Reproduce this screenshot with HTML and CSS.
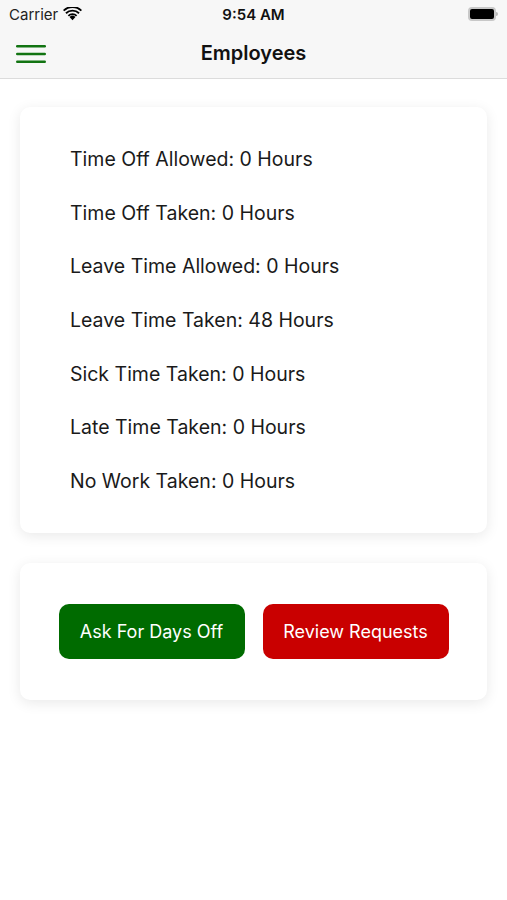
FILE: index.html
```html
<!DOCTYPE html>
<html>
<head>
  <meta charset="utf-8">
  <title>Employees</title>
  <link rel="stylesheet" href="styles.css">
</head>
<body>
  <header class="topbar">
    <div class="status">
      <span class="carrier">Carrier
        <svg class="wifi" width="19" height="14" viewBox="0 0 18 13">
          <path d="M9 12.5 L6.2 9.4 A4 4 0 0 1 11.8 9.4 Z" fill="#000"/>
          <path d="M4.5 7.6 A6.5 6.5 0 0 1 13.5 7.6 L12.3 8.9 A4.7 4.7 0 0 0 5.7 8.9 Z" fill="#000"/>
          <path d="M2.2 5.1 A9.8 9.8 0 0 1 15.8 5.1 L14.6 6.4 A8 8 0 0 0 3.4 6.4 Z" fill="#000"/>
          <path d="M0 2.6 A13 13 0 0 1 18 2.6 L16.8 3.9 A11.2 11.2 0 0 0 1.2 3.9 Z" fill="#000"/>
        </svg>
      </span>
      <span class="clock">9:54 AM</span>
      <span class="battery"><span class="battery-level"></span></span>
    </div>
    <nav class="navbar">
      <button class="menu" aria-label="Menu">
        <svg width="30" height="20" viewBox="0 0 30 20">
          <rect x="0" y="1" width="30" height="2.4" rx="1.2" fill="#127412"/>
          <rect x="0" y="8.8" width="30" height="2.4" rx="1.2" fill="#127412"/>
          <rect x="0" y="16.6" width="30" height="2.4" rx="1.2" fill="#127412"/>
        </svg>
      </button>
      <h1 class="title">Employees</h1>
    </nav>
  </header>

  <main class="content">
    <section class="card stats">
      <p>Time Off Allowed: 0 Hours</p>
      <p>Time Off Taken: 0 Hours</p>
      <p>Leave Time Allowed: 0 Hours</p>
      <p>Leave Time Taken: 48 Hours</p>
      <p>Sick Time Taken: 0 Hours</p>
      <p>Late Time Taken: 0 Hours</p>
      <p>No Work Taken: 0 Hours</p>
    </section>

    <section class="card actions">
      <button class="btn btn-green">Ask For Days Off</button>
      <button class="btn btn-red">Review Requests</button>
    </section>
  </main>
</body>
</html>
```

FILE: styles.css
```css
html { background: #fff; }

body {
  margin: 0;
  font-family: "Inter", "Liberation Sans", Arial, sans-serif;
  color: #111;
}

.topbar {
  background: #f7f7f7;
  border-bottom: 1px solid #dcdcdc;
}

.status {
  height: 28px;
  display: flex;
  align-items: center;
  justify-content: space-between;
  padding: 0 9px 0 9px;
  font-size: 15px;
}

.carrier {
  display: flex;
  align-items: center;
  gap: 5px;
  width: 120px;
  color: #222;
}

.clock {
  font-weight: 600;
  font-size: 15px;
}

.battery {
  width: 120px;
  display: flex;
  justify-content: flex-end;
  position: relative;
}

.battery-level {
  display: block;
  width: 24px;
  height: 10px;
  background: #000;
  border: 2px solid #c8c8c8;
  border-radius: 4px;
  margin-right: 2px;
}

.battery::after {
  content: "";
  position: absolute;
  right: 0;
  top: 5px;
  width: 2px;
  height: 4px;
  background: #b8b8b8;
  border-radius: 0 2px 2px 0;
}

.navbar {
  height: 50px;
  display: flex;
  align-items: center;
  position: relative;
}

.menu {
  background: none;
  border: none;
  padding: 0;
  margin-left: 16px;
  margin-top: 2px;
  display: flex;
}

.title {
  position: absolute;
  left: 0;
  right: 0;
  text-align: center;
  margin: 0;
  font-size: 20px;
  font-weight: 600;
  pointer-events: none;
}

.content {
  padding: 28px 20px;
  display: flex;
  flex-direction: column;
  gap: 30px;
}

.card {
  background: #fff;
  border-radius: 10px;
  box-shadow: 0 3px 14px rgba(0, 0, 0, 0.09);
}

.stats {
  padding: 36px 50px 14px 50px;
}

.stats p {
  margin: 0;
  height: 53.7px;
  line-height: 32px;
  font-size: 19.5px;
  color: #1a1a1a;
}

.actions {
  height: 137px;
  display: flex;
  align-items: center;
  justify-content: center;
  gap: 18px;
}

.btn {
  width: 186px;
  height: 55px;
  border: none;
  border-radius: 10px;
  color: #fff;
  font-family: inherit;
  font-size: 18px;
}

.btn-green { background: #006b00; }
.btn-red { background: #c90000; }
```
